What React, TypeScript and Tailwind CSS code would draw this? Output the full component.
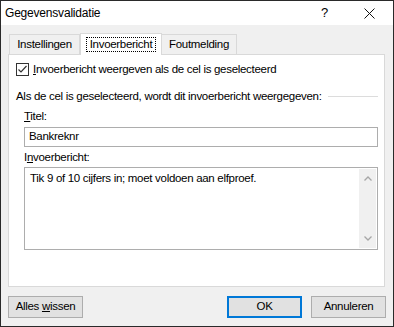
import React from "react";

const font = { fontFamily: '"Liberation Sans", Arial, sans-serif' };

function CloseIcon() {
  return (
    <svg width="11" height="11" viewBox="0 0 11 11" className="block">
      <path d="M0.5 0.5 L10.5 10.5 M10.5 0.5 L0.5 10.5" stroke="#111" strokeWidth="1" fill="none" />
    </svg>
  );
}

function Check() {
  return (
    <div className="w-[13px] h-[13px] border border-[#333] bg-white flex items-center justify-center shrink-0">
      <svg width="11" height="11" viewBox="0 0 11 11" className="block">
        <path d="M1.5 5.5 L4 8 L9.5 2" stroke="#333" strokeWidth="1.2" fill="none" />
      </svg>
    </div>
  );
}

function Chevron({ up }: { up?: boolean }) {
  return (
    <svg width="8" height="5" viewBox="0 0 8 5" className="block">
      <path d={up ? "M0.5 4.5 L4 1 L7.5 4.5" : "M0.5 0.5 L4 4 L7.5 0.5"} stroke="#a6a6a6" strokeWidth="1.3" fill="none" />
    </svg>
  );
}

export default function App() {
  return (
    <div
      className="w-[394px] h-[327px] border border-[#2a2a2a] flex flex-col text-[11.5px] tracking-[-0.3px] text-black bg-[#f0f0f0] overflow-hidden"
      style={font}
    >
      {/* Title bar */}
      <div className="h-[24px] bg-white flex items-center shrink-0">
        <span className="pl-[4px] text-[12px] tracking-[-0.2px]">Gegevensvalidatie</span>
        <span className="ml-auto mr-[36px] text-[13px]">?</span>
        <span className="mr-[18px]"><CloseIcon /></span>
      </div>

      {/* Body */}
      <div className="flex-1 flex flex-col px-[7px] pt-[8px]">
        {/* Tabs */}
        <div className="flex items-end h-[21px] pl-[1px] relative z-10">
          <div className="h-[20px] w-[71px] border border-b-0 border-[#d9d9d9] bg-[#f0f0f0] flex items-center justify-center">
            Instellingen
          </div>
          <div className="h-[22px] w-[82px] -mb-px border border-b-0 border-[#d9d9d9] bg-white flex items-center justify-center">
            <span className="border border-dotted border-black px-[3px] leading-[12px] pb-[1px]">Invoerbericht</span>
          </div>
          <div className="h-[20px] w-[75px] border border-b-0 border-l-0 border-[#d9d9d9] bg-[#f0f0f0] flex items-center justify-center">
            Foutmelding
          </div>
        </div>

        {/* Panel */}
        <div className="h-[233px] w-[377px] border border-[#d9d9d9] bg-white flex flex-col pl-[7px] pr-[6px] pt-[8px]">
          <div className="flex items-center h-[13px] gap-[4px]">
            <Check />
            <span><span className="underline">I</span>nvoerbericht weergeven als de cel is geselecteerd</span>
          </div>

          <div className="flex items-center h-[15px] mt-[13px]">
            <span className="whitespace-nowrap">Als de cel is geselecteerd, wordt dit invoerbericht weergegeven:</span>
            <div className="flex-1 ml-[6px] h-px bg-[#dcdcdc]" />
          </div>

          <div className="pl-[8px] flex flex-col">
            <div className="h-[15px] mt-[5px] leading-[15px]">
              <span className="underline">T</span>itel:
            </div>
            <div className="mt-[3px] h-[20px] border border-[#adadad] bg-white flex items-center pl-[4px]">
              Bankreknr
            </div>
            <div className="h-[15px] mt-[3px] leading-[15px]">
              I<span className="underline">n</span>voerbericht:
            </div>
            <div className="mt-[2px] h-[83px] border border-[#adadad] bg-white flex p-px">
              <div className="flex-1 pl-[4px] pt-[2px] leading-[15px]">
                Tik 9 of 10 cijfers in; moet voldoen aan elfproef.
              </div>
              <div className="w-[17px] bg-[#f0f0f0] flex flex-col items-center justify-between py-[7px]">
                <Chevron up />
                <Chevron />
              </div>
            </div>
          </div>
        </div>

        {/* Buttons */}
        <div className="flex mt-[9px]">
          <div className="h-[22px] w-[75px] border border-[#adadad] bg-[#e1e1e1] flex items-center justify-center">
            <span>Alles <span className="underline">w</span>issen</span>
          </div>
          <div className="ml-auto h-[22px] w-[75px] border-2 border-[#0078d7] bg-[#e1e1e1] flex items-center justify-center">
            OK
          </div>
          <div className="ml-[9px] h-[22px] w-[75px] border border-[#adadad] bg-[#e1e1e1] flex items-center justify-center">
            Annuleren
          </div>
        </div>
      </div>
    </div>
  );
}
